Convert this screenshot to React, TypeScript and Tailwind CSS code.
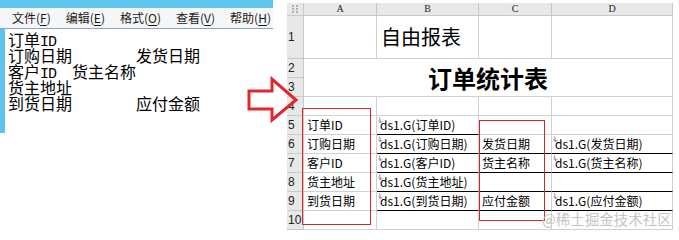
import React from "react";

const CJK = "font-['Noto_Sans_CJK_SC',sans-serif]";

function CellArrow() {
  return (
    <svg className="absolute left-[1px] top-[1px]" width="5" height="7" viewBox="0 0 5 7">
      <path d="M1.5 0.5 L2.5 5.5" stroke="#8a8a8a" strokeWidth="1" fill="none" />
      <path d="M0.5 3.5 L2.5 6 L4.5 3.8" stroke="#8a8a8a" strokeWidth="1" fill="none" />
    </svg>
  );
}

type CellProps = {
  children?: React.ReactNode;
  className?: string;
  arrow?: boolean;
};

function Cell({ children, className = "", arrow }: CellProps) {
  return (
    <div
      className={`relative border-r border-b border-[#d0d0d0] flex items-center pl-[3px] text-[12px] leading-none text-black whitespace-nowrap ${CJK} ${className}`}
    >
      {arrow && <CellArrow />}
      {children}
    </div>
  );
}

function RowHead({ n, className = "" }: { n: number; className?: string }) {
  return (
    <div
      className={`border-r border-b border-[#c8c8c8] bg-[#e8e8e8] flex items-center pl-[1px] text-[12px] text-[#222] font-['Liberation_Sans',sans-serif] ${className}`}
    >
      {n}
    </div>
  );
}

function ColHead({ l }: { l: string }) {
  return (
    <div className="border-r border-b border-[#c8c8c8] bg-[#e8e8e8] flex items-center justify-center text-[10px] leading-none text-[#222] font-['Liberation_Serif',serif]">
      {l}
    </div>
  );
}

function Expr({ f }: { f: string }) {
  return <span>ds1.G({f})</span>;
}

function ID() {
  return (
    <span className="font-['Liberation_Mono',monospace] text-[15px] tracking-[-1px]">ID</span>
  );
}

function Line({ children }: { children?: React.ReactNode }) {
  return <div className="h-[16px] flex items-baseline whitespace-nowrap">{children}</div>;
}

export default function App() {
  const menu = [
    ["文件", "F"],
    ["编辑", "E"],
    ["格式", "O"],
    ["查看", "V"],
    ["帮助", "H"],
  ];
  return (
    <div className="relative w-[679px] h-[240px] bg-white overflow-hidden flex">
      {/* Notepad window */}
      <div className="w-[287px] shrink-0">
        <div className="w-[273px] h-[133px] flex flex-col bg-[#5fc4ee]">
          <div className="h-[8px] shrink-0" />
          <div
            className={`h-[21px] shrink-0 bg-[#f5f6f7] border-b border-[#8ea3b8] flex items-center pl-[12px] gap-[15px] text-[12px] text-[#1a1a1a] ${CJK}`}
          >
            {menu.map(([t, k]) => (
              <span key={k} className="leading-none">
                {t}(<span className="underline underline-offset-2">{k}</span>)
              </span>
            ))}
          </div>
          <div className="flex-1 flex">
            <div className="w-[5px] shrink-0 bg-[#5fc4ee]" />
            <div
              className={`flex-1 bg-white pl-[3px] pt-[2px] text-[16px] leading-[16px] text-black ${CJK}`}
            >
              <Line>
                <span>订单</span>
                <ID />
              </Line>
              <Line>
                <span className="w-[128px]">订购日期</span>
                <span>发货日期</span>
              </Line>
              <Line>
                <span className="w-[64px]">
                  客户<ID />
                </span>
                <span>货主名称</span>
              </Line>
              <Line>
                <span>货主地址</span>
              </Line>
              <Line>
                <span className="w-[128px]">到货日期</span>
                <span>应付金额</span>
              </Line>
            </div>
          </div>
        </div>
      </div>

      {/* Spreadsheet */}
      <div className="pt-[3px]">
        <div className="grid grid-cols-[17px_73px_102px_73px_121px] grid-rows-[13px_43px_19px_19px_19px_19px_19px_19px_19px_19px_19px]">
          {/* header */}
          <div className="border-r border-b border-[#c8c8c8] bg-[#e8e8e8] flex items-center justify-center">
            <svg width="8" height="8" viewBox="0 0 8 8">
              {[0, 3, 6].map((y) =>
                [1, 5].map((x) => (
                  <rect key={`${x}-${y}`} x={x} y={y} width="2" height="2" fill="#b0b0b0" />
                ))
              )}
            </svg>
          </div>
          <ColHead l="A" />
          <ColHead l="B" />
          <ColHead l="C" />
          <ColHead l="D" />

          {/* row 1 */}
          <RowHead n={1} />
          <Cell />
          <Cell className="text-[20px] pl-[4px]">自由报表</Cell>
          <Cell />
          <Cell />

          {/* rows 2-3 merged */}
          <RowHead n={2} />
          <div
            className={`col-span-4 row-span-2 border-r border-b border-[#d0d0d0] flex items-center justify-center text-[24px] font-bold text-black ${CJK}`}
          >
            订单统计表
          </div>
          <RowHead n={3} />

          {/* row 4 */}
          <RowHead n={4} />
          <Cell />
          <Cell />
          <Cell />
          <Cell />

          {/* row 5 */}
          <RowHead n={5} />
          <Cell>订单ID</Cell>
          <Cell arrow className="border-b-black">
            <Expr f="订单ID" />
          </Cell>
          <Cell />
          <Cell />

          {/* row 6 */}
          <RowHead n={6} className="bg-[#dceaf6]" />
          <Cell>订购日期</Cell>
          <Cell arrow className="border-b-black">
            <Expr f="订购日期" />
          </Cell>
          <Cell className="border-b-black">发货日期</Cell>
          <Cell arrow className="border-b-black">
            <Expr f="发货日期" />
          </Cell>

          {/* row 7 */}
          <RowHead n={7} />
          <Cell>客户ID</Cell>
          <Cell arrow className="border-b-black">
            <Expr f="客户ID" />
          </Cell>
          <Cell className="border-b-black">货主名称</Cell>
          <Cell arrow className="border-b-black">
            <Expr f="货主名称" />
          </Cell>

          {/* row 8 */}
          <RowHead n={8} />
          <Cell>货主地址</Cell>
          <Cell arrow className="border-b-black">
            <Expr f="货主地址" />
          </Cell>
          <Cell className="border-b-black" />
          <Cell className="border-b-black" />

          {/* row 9 */}
          <RowHead n={9} />
          <Cell>到货日期</Cell>
          <Cell arrow className="border-b-black">
            <Expr f="到货日期" />
          </Cell>
          <Cell className="border-b-black">应付金额</Cell>
          <Cell arrow className="border-b-black">
            <Expr f="应付金额" />
          </Cell>

          {/* row 10 */}
          <RowHead n={10} />
          <Cell />
          <Cell />
          <Cell />
          <Cell />
        </div>
      </div>

      {/* Red annotation boxes */}
      <div className="absolute left-[302px] top-[108px] w-[69px] h-[117px] border border-[#d0282e]" />
      <div className="absolute left-[479px] top-[120px] w-[66px] h-[101px] border border-[#d0282e]" />

      {/* Red arrow */}
      <svg className="absolute left-0 top-0" width="679" height="240" viewBox="0 0 679 240">
        <polygon
          points="249,91 272,91 272,79 296,100 272,120 272,109 249,109"
          fill="none"
          stroke="#e3262d"
          strokeWidth="3"
          strokeLinejoin="miter"
        />
      </svg>

      {/* Watermark */}
      <div
        className={`absolute left-[542px] top-[212px] text-[14.5px] leading-none text-[#c4c4c4] ${CJK}`}
      >
        @稀土掘金技术社区
      </div>
    </div>
  );
}
